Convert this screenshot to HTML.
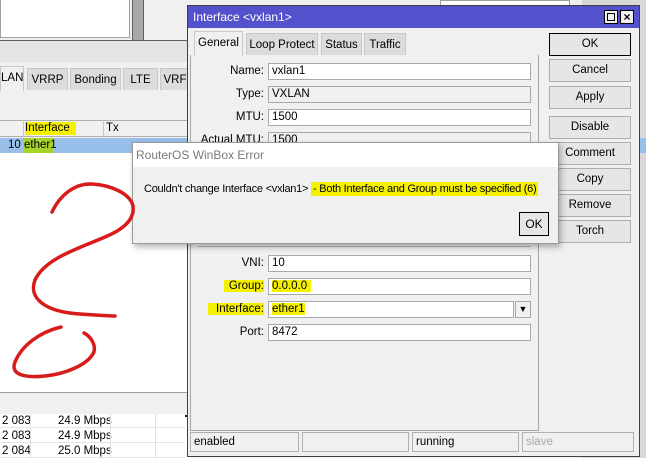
<!DOCTYPE html>
<html><head><meta charset="utf-8"><style>
*{box-sizing:border-box;margin:0;padding:0}
body{width:646px;height:458px;overflow:hidden;background:#f0f0f0;position:relative;font-family:"Liberation Sans",sans-serif;font-size:11px;color:#000}
.a{position:absolute}
.tab{position:absolute;height:22px;border:1px solid #c8c8c8;border-bottom:none;background:#dcdcdc;text-align:center;line-height:22px;font-size:11.5px}
.fld{position:absolute;height:17px;background:#fff;border:1px solid #a8a8a8;padding-left:3px;line-height:15px;font-size:11.5px}
.fld.g{background:#f0f0f0}
.lbl{position:absolute;text-align:right;width:120px;font-size:11.5px;line-height:17px}
.btn{position:absolute;left:549px;width:82px;height:23px;border:1px solid #adadad;background:#e6e6e6;text-align:center;line-height:21px;font-size:11.5px}
.hl{background:#f5f000}
.st{position:absolute;top:432px;height:20px;border:1px solid #b0b0b0;line-height:18px;padding-left:3px;font-size:11.5px}
.row{position:absolute;left:0;height:14px;font-size:11.5px;line-height:14px;border-bottom:1px solid #e4e4e4;width:185px;background:#fff}
</style></head><body>
<div class="a" style="left:0;top:0;width:130px;height:38px;background:#fff;border:1px solid #a0a0a0;border-top:none"></div>
<div class="a" style="left:132px;top:0;width:12px;height:40px;background:#a8a8a8;border-left:1px solid #606060;border-right:1px solid #606060"></div>
<div class="a" style="left:0;top:40px;width:190px;height:22px;background:#e4e4e4;border-top:1px solid #606060"></div>
<div class="tab" style="left:0;top:66px;width:24px;background:#f0f0f0;height:25px">LAN</div>
<div class="tab" style="left:27px;top:68px;width:41px">VRRP</div>
<div class="tab" style="left:70px;top:68px;width:51px">Bonding</div>
<div class="tab" style="left:123px;top:68px;width:35px">LTE</div>
<div class="tab" style="left:160px;top:68px;width:30px">VRF</div>
<div class="a" style="left:0;top:120px;width:190px;height:17px;background:#f0f0f0;border-top:1px solid #b0b0b0;border-bottom:1px solid #b0b0b0"></div>
<div class="a" style="left:23px;top:120px;width:1px;height:32px;background:#c8c8c8"></div>
<div class="a" style="left:103px;top:120px;width:1px;height:32px;background:#c8c8c8"></div>
<div class="a hl" style="left:25px;top:122px;width:51px;height:13px;font-size:11.5px;line-height:13px">Interface</div>
<div class="a" style="left:106px;top:122px;font-size:11.5px;line-height:13px">Tx</div>
<div class="a" style="left:0;top:138px;width:190px;height:15px;background:#99c0ea"></div>
<div class="a" style="left:8px;top:138px;font-size:11.5px;line-height:15px">10</div>
<div class="a" style="left:24px;top:138px;width:29px;height:15px;background:#a6d22a;font-size:11.5px;line-height:15px">ether1</div>
<div class="a" style="left:0;top:153px;width:190px;height:239px;background:#fff"></div>
<div class="a" style="left:0;top:392px;width:190px;height:25px;background:#f0f0f0;border-top:1px solid #a0a0a0;border-bottom:2px solid #202020"></div>
<div class="a" style="left:0;top:417px;width:190px;height:41px;background:#fff"></div>
<div class="row" style="top:414px"><span class="a" style="left:2px">2 083</span><span class="a" style="left:58px">24.9 Mbps</span></div>
<div class="row" style="top:429px"><span class="a" style="left:2px">2 083</span><span class="a" style="left:58px">24.9 Mbps</span></div>
<div class="row" style="top:444px"><span class="a" style="left:2px">2 084</span><span class="a" style="left:58px">25.0 Mbps</span></div>
<div class="a" style="left:30px;top:414px;width:1px;height:44px;background:#e0e0e0"></div>
<div class="a" style="left:110px;top:414px;width:1px;height:44px;background:#e0e0e0"></div>
<div class="a" style="left:155px;top:414px;width:1px;height:44px;background:#e0e0e0"></div>
<div class="a" style="left:440px;top:0;width:130px;height:6px;background:#fff;border:1px solid #a0a0a0"></div>
<div class="a" style="left:582px;top:0;width:64px;height:458px;background:#d8d8d8"></div>
<div class="a" style="left:638px;top:138px;width:8px;height:15px;background:#99c0ea"></div>

<div class="a" style="left:187px;top:5px;width:453px;height:452px;background:#f0f0f0;border:1px solid #404040"></div>
<div class="a" style="left:188px;top:6px;width:451px;height:22px;background:#5451cc;color:#fff;font-size:12px;line-height:22px;padding-left:5px">Interface &lt;vxlan1&gt;</div>
<div class="a" style="left:604px;top:10px;width:14px;height:14px;background:#f0f0f0;border:1px solid #000"><div class="a" style="left:2px;top:2px;width:8px;height:8px;border:1px solid #000"></div></div>
<div class="a" style="left:620px;top:10px;width:14px;height:14px;background:#f0f0f0;border:1px solid #000;font-size:12px;line-height:12px;text-align:center;font-weight:bold">×</div>
<div class="tab" style="left:194px;top:31px;width:49px;height:25px;background:#f0f0f0;line-height:22px">General</div>
<div class="tab" style="left:246px;top:33px;width:72px">Loop Protect</div>
<div class="tab" style="left:321px;top:33px;width:41px">Status</div>
<div class="tab" style="left:364px;top:33px;width:42px">Traffic</div>
<div class="a" style="left:190px;top:55px;width:349px;height:376px;border:1px solid #a8a8a8;border-top:none"></div>
<div class="lbl" style="left:144px;top:63px">Name:</div><div class="fld" style="left:268px;top:63px;width:263px">vxlan1</div>
<div class="lbl" style="left:144px;top:86px">Type:</div><div class="fld g" style="left:268px;top:86px;width:263px">VXLAN</div>
<div class="lbl" style="left:144px;top:109px">MTU:</div><div class="fld" style="left:268px;top:109px;width:263px">1500</div>
<div class="lbl" style="left:144px;top:132px">Actual MTU:</div><div class="fld g" style="left:268px;top:132px;width:263px">1500</div>
<div class="a" style="left:198px;top:246px;width:333px;height:1px;background:#b8b8b8"></div>
<div class="lbl" style="left:144px;top:255px">VNI:</div><div class="fld" style="left:268px;top:255px;width:263px">10</div>
<div class="lbl" style="left:144px;top:278px"><span class="hl" style="padding-left:5px">Group:</span></div><div class="fld" style="left:268px;top:278px;width:263px"><span class="hl" style="padding-right:4px">0.0.0.0</span></div>
<div class="lbl" style="left:144px;top:301px"><span class="hl" style="padding-left:8px">Interface:</span></div><div class="fld" style="left:268px;top:301px;width:246px"><span class="hl">ether1</span></div>
<div class="a" style="left:515px;top:301px;width:16px;height:17px;border:1px solid #a8a8a8;background:#f0f0f0;text-align:center;font-size:9px;line-height:15px">&#9660;</div>
<div class="lbl" style="left:144px;top:324px">Port:</div><div class="fld" style="left:268px;top:324px;width:263px">8472</div>
<div class="btn" style="top:33px;border:1px solid #000">OK</div>
<div class="btn" style="top:59px">Cancel</div>
<div class="btn" style="top:86px">Apply</div>
<div class="btn" style="top:116px">Disable</div>
<div class="btn" style="top:142px">Comment</div>
<div class="btn" style="top:168px">Copy</div>
<div class="btn" style="top:194px">Remove</div>
<div class="btn" style="top:220px">Torch</div>
<div class="st" style="left:190px;width:109px">enabled</div>
<div class="st" style="left:302px;width:107px"></div>
<div class="st" style="left:412px;width:107px">running</div>
<div class="st" style="left:522px;width:112px;color:#a8a8a8">slave</div>

<div class="a" style="left:132px;top:142px;width:427px;height:102px;background:#f0f0f0;border:1px solid #9a9a9a;box-shadow:2px 3px 6px rgba(0,0,0,0.3)"></div>
<div class="a" style="left:133px;top:143px;width:425px;height:24px;background:#fff;color:#7a7a7a;font-size:12px;line-height:24px;padding-left:3px">RouterOS WinBox Error</div>
<div class="a" style="left:144px;top:182px;font-size:11px;letter-spacing:-0.25px;line-height:14px;white-space:nowrap">Couldn't change Interface &lt;vxlan1&gt; <span class="hl" style="padding:1px 2px">- Both Interface and Group must be specified (6)</span></div>
<div class="a" style="left:519px;top:212px;width:30px;height:24px;border:1px solid #000;background:#e6e6e6;text-align:center;line-height:22px;font-size:12px">OK</div>

<svg class="a" style="left:0;top:0" width="646" height="458">
<path d="M52 212 C60 195 75 183 92 184 C110 185 130 193 133 206 C135 220 122 230 105 237 C80 248 45 258 35 280 C28 298 45 312 80 314 C95 315 110 316 115 316" fill="none" stroke="#d81c1c" stroke-width="3.5" stroke-linecap="round"/>
<path d="M61 327 C40 332 22 345 15 362 C10 375 25 378 45 376 C65 374 88 365 94 352 C96 344 90 336 84 333" fill="none" stroke="#d81c1c" stroke-width="3.5" stroke-linecap="round"/>
</svg>
</body></html>
